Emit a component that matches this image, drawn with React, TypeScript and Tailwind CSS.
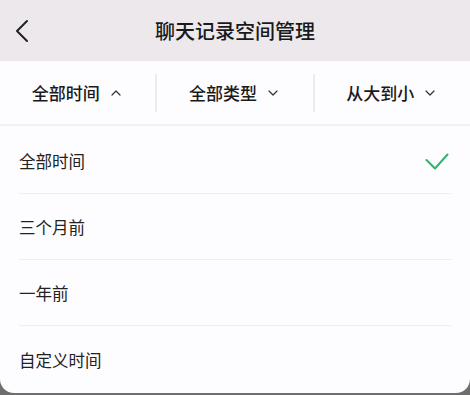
import { ChevronDown, ChevronUp, ChevronLeft } from "lucide-react";

const filters = [
  { label: "全部时间", open: true },
  { label: "全部类型", open: false },
  { label: "从大到小", open: false },
];

const options = ["全部时间", "三个月前", "一年前", "自定义时间"];

function CheckMark() {
  return (
    <svg viewBox="0 0 24 18" className="mr-[2px] h-[18px] w-[24px]" fill="none">
      <path d="M1.5 7 L10 15.5 L22.5 1.5" stroke="#2fb46e" strokeWidth="2" strokeLinecap="round" strokeLinejoin="round" />
    </svg>
  );
}

export default function App() {
  return (
    <div
      className="flex h-[395px] w-[470px] flex-col overflow-hidden bg-[#6e6e6e]"
      style={{ fontFamily: '"Noto Sans CJK SC", "Noto Sans", sans-serif' }}
    >
      <div className="flex h-[393px] flex-col overflow-hidden rounded-b-[14px] bg-[#fdfcfe]">
        <header className="relative flex h-[61px] shrink-0 items-center justify-center bg-[#ece8ec]">
          <ChevronLeft className="absolute left-[2px] top-[11px] h-[40px] w-[40px] text-[#222]" strokeWidth={1.2} />
          <h1 className="text-[20px] font-medium text-[#1a1a1a]">聊天记录空间管理</h1>
        </header>

        <nav className="flex h-[65px] shrink-0 items-center border-b-2 border-[#f2f0f3]">
          {filters.map((f, i) => (
            <div
              key={f.label}
              className={
                "flex h-[38px] flex-1 items-center justify-center gap-[8px] " +
                (i > 0 ? "border-l-2 border-[#eceaed]" : "")
              }
            >
              <span className="text-[17px] font-medium text-[#1a1a1a]">{f.label}</span>
              {f.open ? (
                <ChevronUp className="h-[16px] w-[16px] text-[#333]" strokeWidth={1.8} />
              ) : (
                <ChevronDown className="h-[16px] w-[16px] text-[#333]" strokeWidth={1.8} />
              )}
            </div>
          ))}
        </nav>

        <ul className="flex flex-col px-[19px] pt-[2px]">
          {options.map((o, i) => (
            <li
              key={o}
              className={
                "flex h-[66px] items-center justify-between pt-[2px] " +
                (i < options.length - 1 ? "border-b border-[#efedf0]" : "")
              }
            >
              <span className="text-[16.5px] text-[#222]">{o}</span>
              {i === 0 && <CheckMark />}
            </li>
          ))}
        </ul>
      </div>
    </div>
  );
}
